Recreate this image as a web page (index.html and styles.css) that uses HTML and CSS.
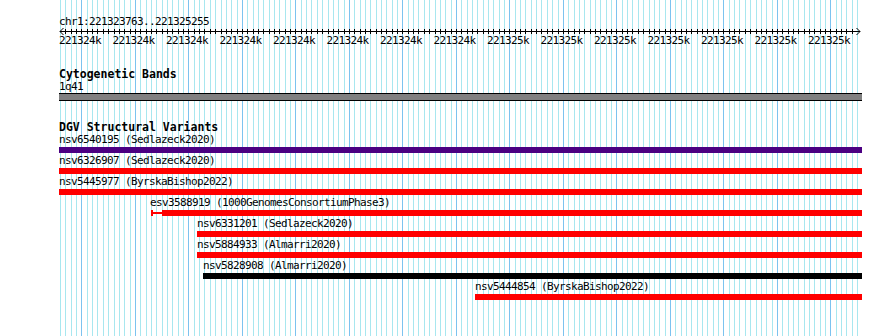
FILE: index.html
```html
<!DOCTYPE html>
<html>
	<head>
		<meta charset="utf-8" />
		<title>chr1:221323763..221325255</title>
		<link rel="stylesheet" href="styles.css">
	</head>
	<body>
		<div class="browser">
			<!-- 网格 -->
			<svg class="grid" id="grid" width="803" height="336"></svg>
			<!-- 标尺 -->
			<div class="ruler">
				<div class="locus">chr1:221323763..221325255</div>
				<svg class="axis" id="axis" width="803" height="8"></svg>
				<div class="ticks">
					<span>221324k</span>
					<span>221324k</span>
					<span>221324k</span>
					<span>221324k</span>
					<span>221324k</span>
					<span>221324k</span>
					<span>221324k</span>
					<span>221324k</span>
					<span>221325k</span>
					<span>221325k</span>
					<span>221325k</span>
					<span>221325k</span>
					<span>221325k</span>
					<span>221325k</span>
					<span>221325k</span>
				</div>
			</div>
			<!-- 标尺 end -->
			<!-- 染色体带 -->
			<div class="track cyto">
				<div class="track-name">Cytogenetic Bands</div>
				<div class="feature">
					<div class="label">1q41</div>
					<div class="band"></div>
				</div>
			</div>
			<!-- 结构变异 -->
			<div class="track dgv">
				<div class="track-name">DGV Structural Variants</div>
				<div class="feature">
					<div class="label">nsv6540195 (Sedlazeck2020)</div>
					<div class="bar purple"></div>
				</div>
				<div class="feature">
					<div class="label">nsv6326907 (Sedlazeck2020)</div>
					<div class="bar red"></div>
				</div>
				<div class="feature">
					<div class="label">nsv5445977 (ByrskaBishop2022)</div>
					<div class="bar red"></div>
				</div>
				<div class="feature" style="margin-left: 91px">
					<div class="label">esv3588919 (1000GenomesConsortiumPhase3)</div>
					<div class="bar split">
						<span class="whisker"></span>
						<span class="body"></span>
					</div>
				</div>
				<div class="feature" style="margin-left: 138px">
					<div class="label">nsv6331201 (Sedlazeck2020)</div>
					<div class="bar red"></div>
				</div>
				<div class="feature" style="margin-left: 138px">
					<div class="label">nsv5884933 (Almarri2020)</div>
					<div class="bar red"></div>
				</div>
				<div class="feature" style="margin-left: 144px">
					<div class="label">nsv5828908 (Almarri2020)</div>
					<div class="bar black"></div>
				</div>
				<div class="feature" style="margin-left: 416px">
					<div class="label">nsv5444854 (ByrskaBishop2022)</div>
					<div class="bar red"></div>
				</div>
			</div>
			<!-- 结构变异 end -->
		</div>
		<script>
			const ns = "http://www.w3.org/2000/svg";
			let grid = document.getElementById("grid");
			let axis = document.getElementById("axis");
			// 每10bp一条线
			function addLine(svg, x1, y1, x2, y2, color){
				let l = document.createElementNS(ns, "line");
				l.setAttribute("x1", x1);
				l.setAttribute("y1", y1);
				l.setAttribute("x2", x2);
				l.setAttribute("y2", y2);
				l.setAttribute("stroke", color);
				l.setAttribute("stroke-width", 1);
				svg.appendChild(l);
			}
			for(let k = 0; k < 150; k++){
				let x = 1 + Math.round(k * 5.35) + 0.5;
				addLine(grid, x, 0, x, 336, k % 10 == 4 ? "#7cc3ef" : "#a8e7ef");
				if(k > 0 && k < 149){
					addLine(axis, x, 2, x, 7, "#000");
				}
			}
			addLine(axis, 1, 4.5, 801, 4.5, "#000");
			addLine(axis, 1, 4.5, 4.5, 1, "#000");
			addLine(axis, 1, 4.5, 4.5, 8, "#000");
			addLine(axis, 801, 4.5, 797.5, 1, "#000");
			addLine(axis, 801, 4.5, 797.5, 8, "#000");
		</script>
	</body>
</html>
```

FILE: styles.css
```css
html,
body {
	margin: 0;
	background: #fff;
}
body {
	font-family: "DejaVu Sans Mono", "Liberation Mono", monospace;
	font-size: 11px;
	letter-spacing: -0.62px;
	color: #000;
	height: 336px;
	overflow: hidden;
}
.browser
{
	position: relative;
	width: 803px;
	height: 336px;
	margin-left: 59px;
}
.grid
{
	position: absolute;
	top: 0;
	left: 0;
}
.ruler,
.track
{
	position: relative;
}
/* 标尺 */
.ruler
{
	padding-top: 16px;
}
.locus
{
	line-height: 11px;
}
.axis
{
	display: block;
}
.ticks
{
	display: flex;
	line-height: 12px;
}
.ticks span
{
	flex: 0 0 53.5px;
}
/* 轨道 */
.track-name
{
	font-weight: bold;
	font-size: 11.5px;
	letter-spacing: 0;
	line-height: 13px;
}
.cyto
{
	margin-top: 20px;
}
.cyto .track-name
{
	padding-top: 1px;
}
.cyto .label
{
	line-height: 11px;
}
.dgv
{
	margin-top: 20px;
}
.label
{
	line-height: 12px;
	white-space: nowrap;
}
.band
{
	height: 6px;
	margin-top: 1px;
	background: #808080;
	border-top: 1px solid #000;
	border-bottom: 1px solid #000;
}
.bar
{
	height: 6px;
	margin-top: 1px;
	margin-bottom: 2px;
}
.purple
{
	background: #4b0082;
}
.red
{
	background: #f00;
}
.black
{
	background: #000;
}
.split
{
	display: flex;
	padding-left: 1px;
}
.whisker
{
	width: 9px;
	border-left: 2px solid #f00;
	background: linear-gradient(#f00, #f00) no-repeat center / 100% 2px;
}
.split .body
{
	flex: 1;
	background: #f00;
}
```
